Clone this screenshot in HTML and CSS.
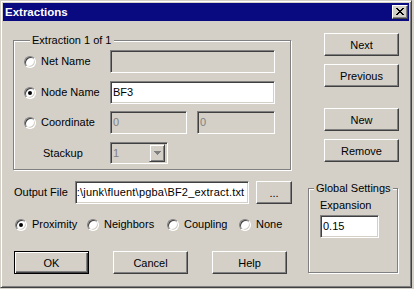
FILE: index.html
```html
<!DOCTYPE html>
<html lang="en">
<head>
    <meta charset="UTF-8">
    <title>Extractions</title>
    <link rel="stylesheet" href="styles.css">
</head>
<body>
    <div class="window">
        <div class="titlebar">
            <span class="title">Extractions</span>
            <button class="close">
                <svg width="8" height="7" viewBox="0 0 8 7" shape-rendering="crispEdges">
                    <path d="M0 0h2v1h-2zM6 0h2v1h-2zM1 1h2v1h-2zM5 1h2v1h-2zM2 2h4v1h-4zM3 3h2v1h-2zM2 4h4v1h-4zM1 5h2v1h-2zM5 5h2v1h-2zM0 6h2v1h-2zM6 6h2v1h-2z" fill="#000"/>
                </svg>
            </button>
        </div>

        <div class="client">
            <div class="top">
                <div class="group extraction">
                    <div class="group-title">Extraction 1 of 1</div>
                    <div class="ext-grid">
                        <div class="opt"><span class="radio"></span>Net Name</div>
                        <div class="field off wide"></div>

                        <div class="opt"><span class="radio on"></span>Node Name</div>
                        <div class="field wide">BF3</div>

                        <div class="opt"><span class="radio"></span>Coordinate</div>
                        <div class="coords">
                            <div class="field off coord-a">0</div>
                            <div class="field off coord-b">0</div>
                        </div>

                        <div class="stackup-label">Stackup</div>
                        <div class="field off combo">
                            <span class="combo-text">1</span>
                            <span class="combo-btn">
                                <svg width="7" height="4" viewBox="0 0 7 4" shape-rendering="crispEdges">
                                    <path d="M0 0h7v1h-7zM1 1h5v1h-5zM2 2h3v1h-3zM3 3h1v1h-1z" fill="#808080"/>
                                </svg>
                            </span>
                        </div>
                    </div>
                </div>

                <div class="side-buttons">
                    <button class="btn">Next</button>
                    <button class="btn">Previous</button>
                    <button class="btn gap-big">New</button>
                    <button class="btn">Remove</button>
                </div>
            </div>

            <div class="bottom">
                <div class="left-block">
                    <div class="output-row">
                        <span class="output-label">Output File</span>
                        <div class="field output-field">:\junk\fluent\pgba\BF2_extract.txt</div>
                        <button class="btn browse">...</button>
                    </div>

                    <div class="mode-row">
                        <div class="opt"><span class="radio on"></span>Proximity</div>
                        <div class="opt"><span class="radio"></span>Neighbors</div>
                        <div class="opt"><span class="radio"></span>Coupling</div>
                        <div class="opt"><span class="radio"></span>None</div>
                    </div>

                    <div class="dialog-buttons">
                        <button class="btn default">OK</button>
                        <button class="btn">Cancel</button>
                        <button class="btn">Help</button>
                    </div>
                </div>

                <div class="group global">
                    <div class="group-title">Global Settings</div>
                    <div class="exp-label">Expansion</div>
                    <div class="field exp-field">0.15</div>
                </div>
            </div>
        </div>
    </div>
</body>
</html>
```

FILE: styles.css
```css
* {
    margin: 0;
    padding: 0;
    box-sizing: border-box;
    font-family: 'Liberation Sans', Arial, sans-serif;
}
body {
    background: #d4d0c8;
    color: #000;
    font-size: 11px;
    line-height: 13px;
}
.window {
    width: 412px;
    height: 288px;
    background: #d4d0c8;
    border: 1px solid;
    border-color: #d4d0c8 #404040 #404040 #d4d0c8;
    box-shadow: inset 1px 1px 0 #fff, inset -1px -1px 0 #808080;
    padding: 2px;
}
.titlebar {
    height: 18px;
    background: #0a0a80;
    display: flex;
    align-items: center;
    justify-content: space-between;
    padding: 0 1px 0 2px;
}
.title {
    color: #fff;
    font-weight: bold;
    font-size: 11.5px;
}
.close {
    width: 16px;
    height: 14px;
    background: #d4d0c8;
    border: 1px solid;
    border-color: #fff #404040 #404040 #fff;
    box-shadow: inset -1px -1px 0 #808080;
    display: flex;
    align-items: center;
    justify-content: center;
    padding: 0 1px 1px 0;
}

.client {
    padding: 12px 0 0 10px;
}
.top {
    display: flex;
    align-items: flex-start;
}

/* etched group box */
.group {
    border: 1px solid #808080;
    box-shadow: inset 1px 1px 0 #fff, 1px 1px 0 #fff;
}
.group-title {
    width: fit-content;
    margin: -7px 0 0 6px;
    padding: 0 2px;
    background: #d4d0c8;
    height: 13px;
}
.extraction {
    width: 278px;
    margin-top: 7px;
    padding: 0 0 5px 10px;
}
.ext-grid {
    margin-top: 3px;
    display: grid;
    grid-template-columns: 86px 165px;
    grid-template-rows: 31px 30px 31px 22px;
}
.opt {
    display: flex;
    align-items: center;
    gap: 5px;
    height: 23px;
}
.stackup-label {
    margin-left: 19px;
    height: 22px;
    display: flex;
    align-items: center;
}

/* classic radio */
.radio {
    width: 12px;
    height: 12px;
    flex: none;
    border-radius: 50%;
    background: #fff;
    border: 1px solid;
    border-color: #808080 #fff #fff #808080;
    box-shadow: inset 1px 1px 0 #404040, inset -1px -1px 0 #d4d0c8;
    display: flex;
    align-items: center;
    justify-content: center;
}
.radio.on::after {
    content: '';
    width: 4px;
    height: 4px;
    border-radius: 50%;
    background: #000;
}

/* sunken edit field */
.field {
    height: 23px;
    background: #fff;
    border: 1px solid;
    border-color: #808080 #fff #fff #808080;
    box-shadow: inset 1px 1px 0 #404040, inset -1px -1px 0 #d4d0c8;
    padding-left: 2px;
    display: flex;
    align-items: center;
    white-space: nowrap;
    overflow: hidden;
}
.field.off {
    background: #d4d0c8;
    color: #808080;
}
.wide {
    width: 165px;
}
.coords {
    display: flex;
    gap: 10px;
}
.coord-a {
    width: 77px;
}
.coord-b {
    width: 78px;
}
.combo {
    width: 58px;
    height: 22px;
    padding: 2px;
    padding-left: 2px;
}
.combo-text {
    flex: 1;
}
.combo-btn {
    width: 16px;
    height: 18px;
    background: #d4d0c8;
    border: 1px solid;
    border-color: #d4d0c8 #404040 #404040 #d4d0c8;
    box-shadow: inset 1px 1px 0 #fff, inset -1px -1px 0 #808080;
    display: flex;
    align-items: center;
    justify-content: center;
}

/* raised push button */
.btn {
    width: 75px;
    height: 23px;
    background: #d4d0c8;
    border: 1px solid;
    border-color: #fff #404040 #404040 #fff;
    box-shadow: inset -1px -1px 0 #808080;
    font-size: 11px;
    color: #000;
}
.btn.default {
    border: 1px solid #000;
    box-shadow: inset 1px 1px 0 #fff, inset -1px -1px 0 #404040, inset -2px -2px 0 #808080;
}
.side-buttons {
    margin-left: 33px;
    display: flex;
    flex-direction: column;
    gap: 8px;
}
.side-buttons .gap-big {
    margin-top: 13px;
}

.bottom {
    display: flex;
    align-items: flex-start;
    margin-top: 11px;
}
.left-block {
    width: 279px;
    padding-left: 1px;
}
.output-row {
    display: flex;
    align-items: center;
    height: 23px;
}
.output-label {
    width: 61px;
}
.output-field {
    width: 175px;
    padding-left: 1px;
    letter-spacing: 0.2px;
}
.browse {
    width: 36px;
    margin-left: 7px;
}
.mode-row {
    margin-top: 14px;
    padding-left: 1px;
    display: grid;
    grid-template-columns: 72px 80px 72px auto;
}
.mode-row .opt {
    height: 13px;
}
.dialog-buttons {
    margin-top: 20px;
    display: flex;
    gap: 24px;
}

.global {
    width: 90px;
    height: 85px;
    margin: 7px 0 0 16px;
    padding-left: 11px;
}
.global .group-title {
    margin-left: -6px;
}
.exp-label {
    margin-top: 4px;
}
.exp-field {
    width: 59px;
    margin-top: 3px;
}
```
